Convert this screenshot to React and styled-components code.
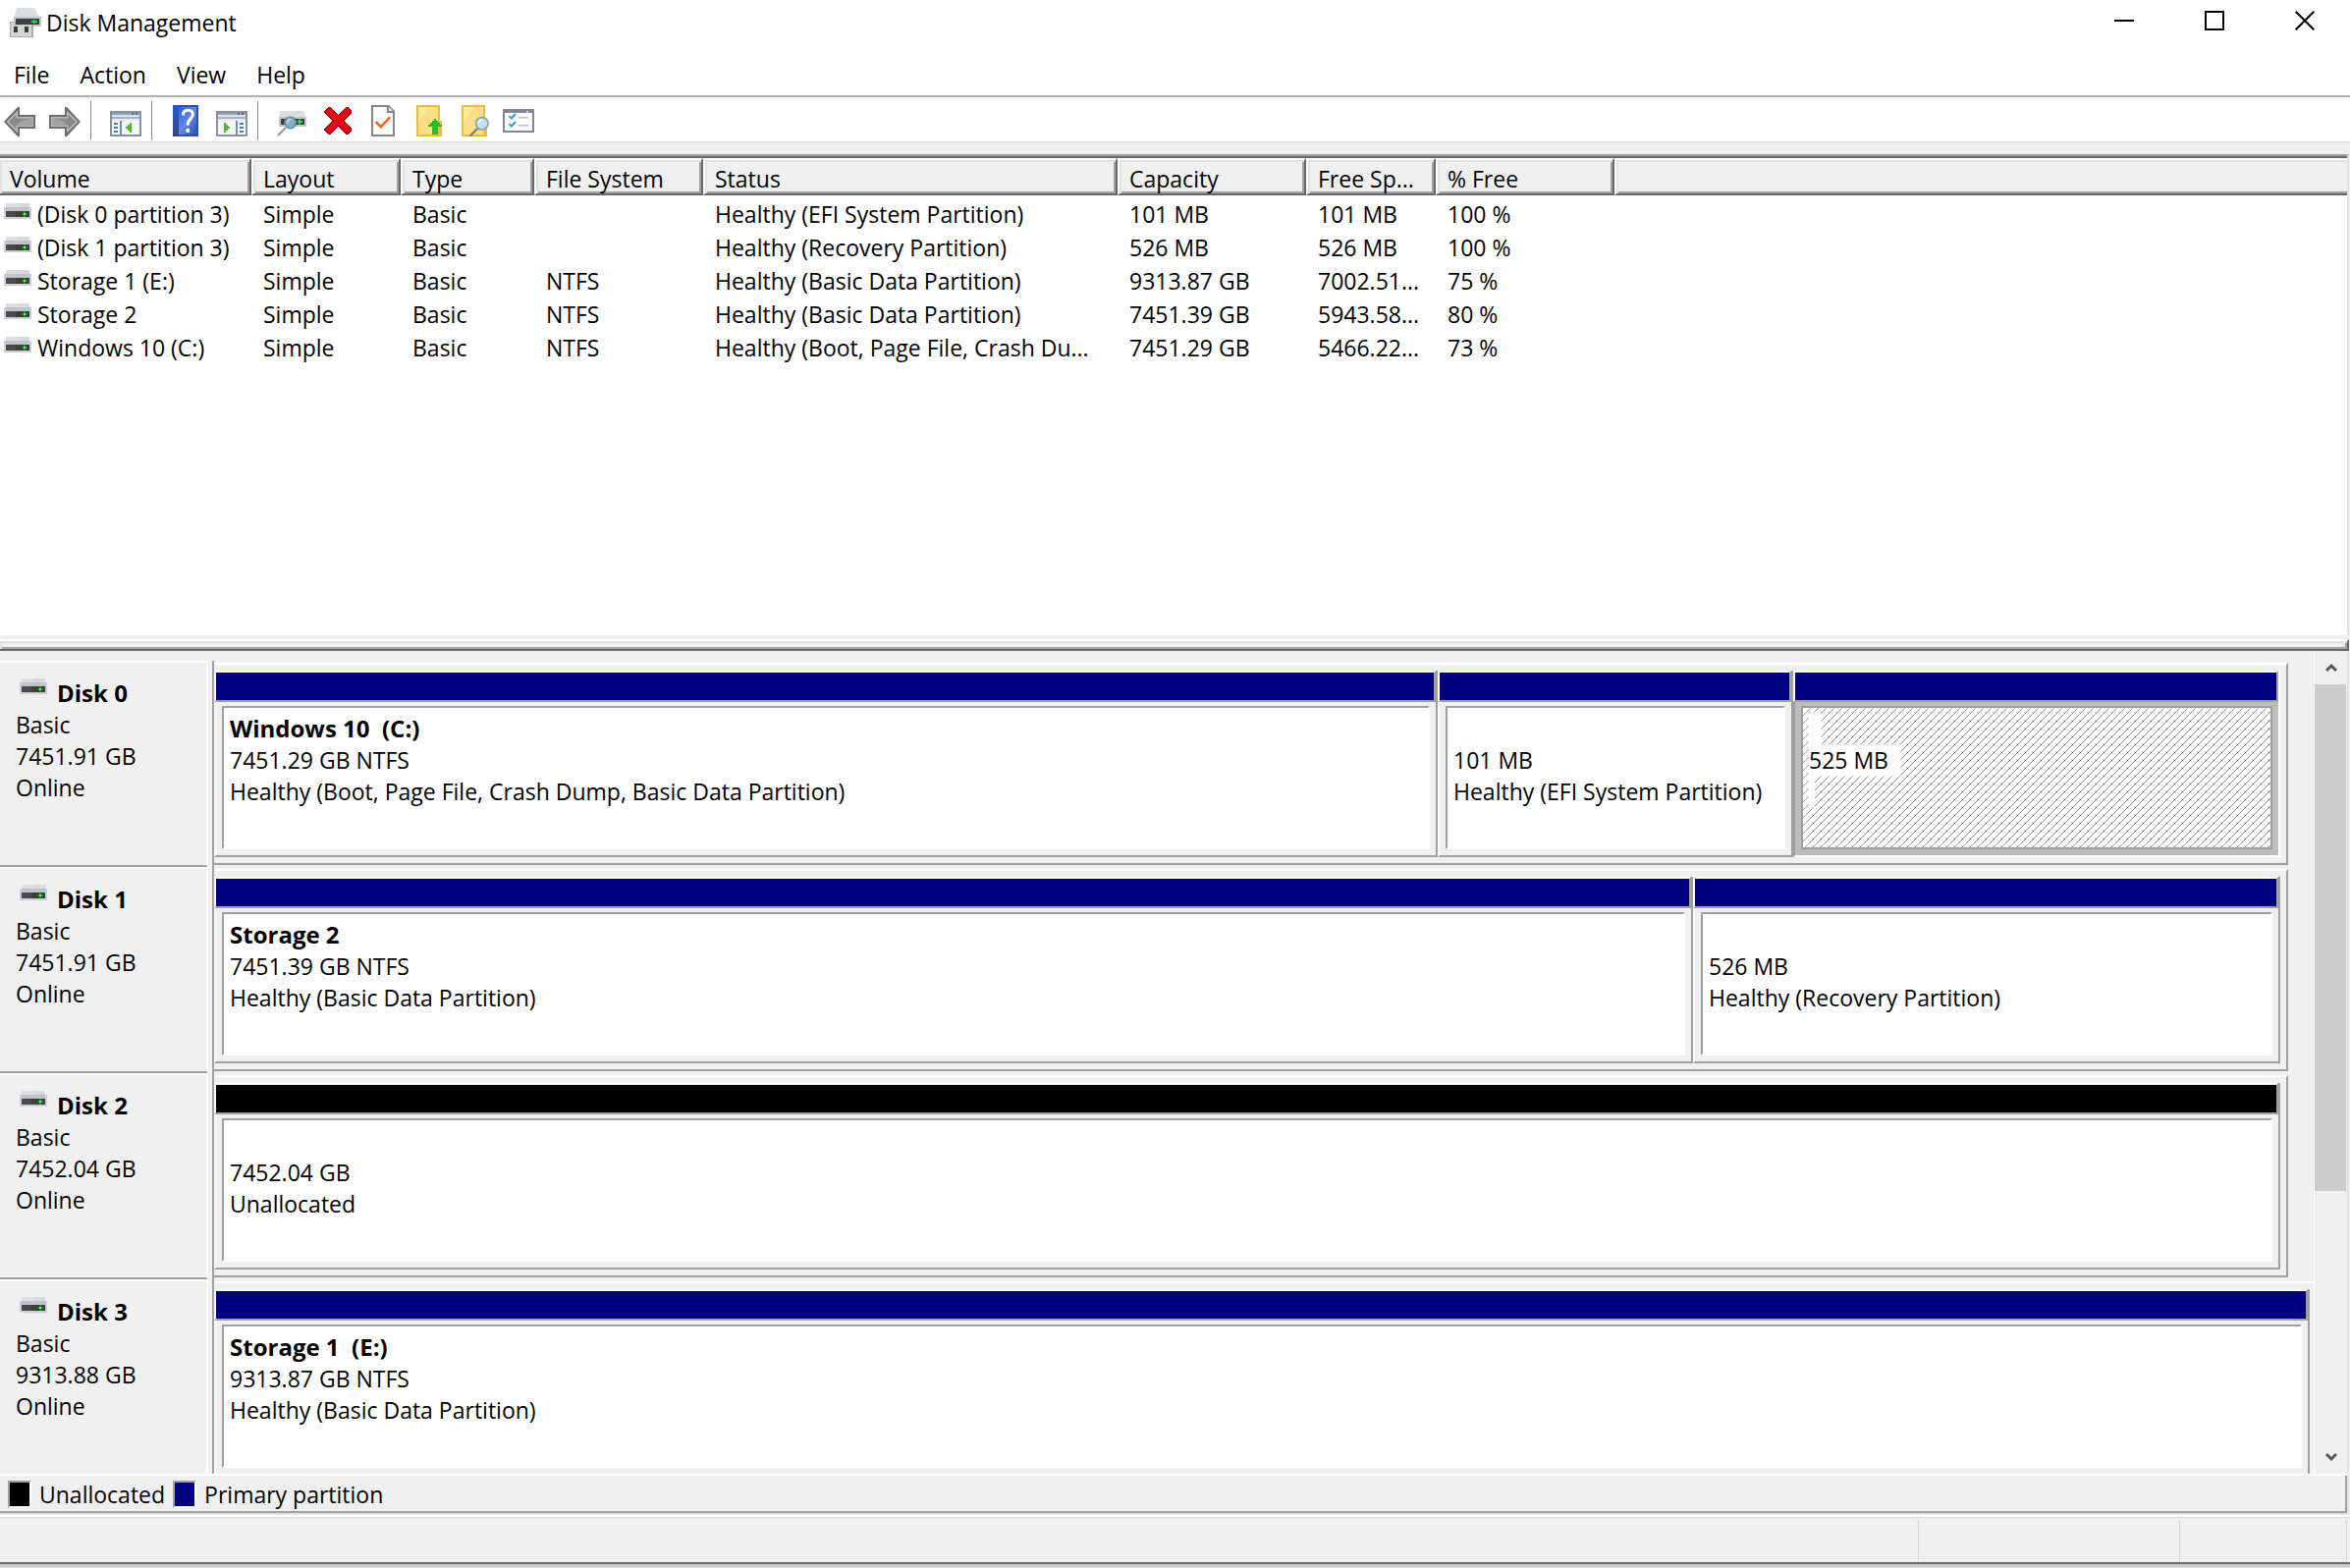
import styled, { createGlobalStyle, css } from 'styled-components';

const GlobalStyle = createGlobalStyle`
  * {
    box-sizing: border-box;
  }

  body {
    margin: 0;
    background: #f0f0f0;
    color: #000;
    font-family: 'Open Sans', 'Noto Sans', sans-serif;
    font-size: 23px;
    line-height: 32px;
  }

  button {
    padding: 0;
    border: 0;
    background: none;
    color: inherit;
    font: inherit;
  }

  svg {
    display: block;
  }
`;

const Window = styled.div`
  display: flex;
  flex-direction: column;
  height: 100vh;
  overflow: hidden;
`;

const TitleBar = styled.header`
  display: flex;
  align-items: flex-start;
  flex: none;
  height: 47px;
  background: #fff;

  h1 {
    flex: 1;
    margin: 0;
    padding: 7px 0 0 5px;
    font-size: 23px;
    font-weight: 400;
    line-height: 32px;
  }
`;

const AppIcon = styled.svg`
  width: 32px;
  height: 32px;
  margin: 7px 0 0 10px;
`;

const WindowButton = styled.button`
  display: flex;
  align-items: center;
  justify-content: center;
  width: 92px;
  height: 42px;

  &:hover {
    background: #e5e5e5;
  }
`;

const MenuBar = styled.nav`
  display: flex;
  gap: 5px;
  flex: none;
  height: 50px;
  padding: 8px 0 0 1px;
  background: #fff;

  button {
    height: 42px;
    padding: 0 13px;
  }

  button:hover {
    background: #e5f3ff;
  }
`;

const ToolBar = styled.div`
  display: flex;
  align-items: center;
  gap: 14px;
  flex: none;
  height: 48px;
  padding: 3px 4px 0;
  border-top: 2px solid #b0b1b5;
  border-bottom: 1px solid #d9d9d9;
  background: #fff;
  box-shadow: inset 0 2px #f3f6fb;
`;

const ToolGroup = styled.div`
  display: flex;
  gap: 14px;
`;

const ToolSeparator = styled.span`
  width: 1px;
  height: 40px;
  margin: 0 5px 0 -4px;
  background: #8e8e8e;
`;

const ToolButton = styled.button`
  width: 32px;
  height: 32px;

  svg {
    width: 32px;
    height: 32px;
  }
`;

const VolumePane = styled.section`
  flex: 486 1 0;
  min-height: 0;
  margin: 12px 1px 0 0;
  overflow: hidden;
  border-top: 2px solid #a0a0a0;
  border-right: 2px solid #e3e3e3;
  background: #fff;
  box-shadow: inset 0 2px #696969;
  padding-top: 2px;
`;

const VolumeTable = styled.table`
  width: 100%;
  table-layout: fixed;
  border-spacing: 0;
  text-align: left;
  white-space: nowrap;

  th {
    padding: 4px 0 0 10px;
    border: 2px solid #fff;
    border-right-color: #696969;
    border-bottom-color: #696969;
    background: #f0f0f0;
    box-shadow: inset 2px 2px #e3e3e3, inset -2px -2px #a0a0a0;
    font-weight: 400;
    line-height: 30px;
  }

  th:first-child {
    border-left: 0;
  }

  th:last-child {
    border-right: 0;
    box-shadow: inset 2px 2px #e3e3e3, inset 0 -2px #a0a0a0;
  }

  td {
    padding: 0 0 0 12px;
    line-height: 34px;
  }

  td:first-child {
    padding-left: 4px;
  }

  tbody::before {
    content: '';
    display: block;
    height: 2px;
  }
`;

const VolumeName = styled.span`
  display: flex;
  gap: 6px;

  svg {
    margin-top: 6px;
  }
`;

const Splitter = styled.div`
  flex: none;
  height: 12px;
  margin: 4px 1px 0 0;
  border: solid;
  border-width: 2px 2px 2px 0;
  border-color: #fff #696969 #696969;
  box-shadow: inset 2px 2px #e3e3e3, inset -2px -2px #a0a0a0;
`;

const DiskPane = styled.section`
  display: flex;
  flex: 838 1 0;
  min-height: 0;
  margin-right: 1px;
  border-right: 2px solid #e3e3e3;
`;

const DiskList = styled.div`
  flex: 1;
  min-width: 0;
  padding-top: 10px;
  overflow: hidden;
`;

const DiskRow = styled.article`
  display: flex;
  gap: 4px;
  height: 210px;
`;

const DiskLabel = styled.div`
  width: 212px;
  padding: 15px 0 0 16px;
  border-top: 2px solid #fff;
  border-right: 2px solid #fff;
  border-bottom: 2px solid #a0a0a0;

  h2 {
    display: flex;
    gap: 10px;
    margin: 0;
    padding-left: 4px;
    font-size: 24px;
    font-weight: 700;
    line-height: 32px;
  }

  p {
    margin: 0;
  }

  svg {
    margin-top: 1px;
  }
`;

const DiskTrack = styled.div`
  flex: 1;
  min-width: 0;
  padding: 2px ${({ $wide }) => ($wide ? 0 : 26)}px 2px 0;
  border-left: 2px solid #a0a0a0;
`;

const DiskFrame = styled.div`
  display: flex;
  height: 206px;
  padding: 6px ${({ $wide }) => ($wide ? 4 : 6)}px 6px 0;
  border-top: 2px solid #fff;
  border-bottom: 2px solid #a0a0a0;
  border-right: ${({ $wide }) => ($wide ? '0' : '2px solid #a0a0a0')};
`;

const PartitionBox = styled.div`
  display: flex;
  flex-direction: column;
  flex: ${({ $share }) => $share} 1 0;
  min-width: 0;
  border-right: 2px solid ${({ $selected }) => ($selected ? '#fff' : '#a0a0a0')};
`;

const PartitionBar = styled.div`
  height: 32px;
  border: 2px solid #fff;
  border-right-color: #a0a0a0;
  border-bottom-color: #a0a0a0;
  background: ${({ $color }) => $color};
`;

const PartitionBody = styled.div`
  display: flex;
  flex: 1;
  padding: 4px 6px 6px;
  border-left: 2px solid #fff;
  border-bottom: 2px solid #a0a0a0;

  ${({ $selected }) =>
    $selected &&
    css`
      background: #bcbcbc;
      border-left-color: #a0a0a0;
      border-bottom-color: #fff;
    `}
`;

const PartitionContent = styled.div`
  display: flex;
  flex: 1;
  flex-direction: column;
  align-items: flex-start;
  min-width: 0;
  padding: 5px 6px;
  border: 2px solid #fff;
  border-top-color: #a0a0a0;
  border-left-color: #a0a0a0;
  background: #fff;
  white-space: pre;

  ${({ $selected }) =>
    $selected &&
    css`
      border-color: #a0a0a0;
      background: linear-gradient(
          135deg,
          transparent 47%,
          #a0a0a0 47%,
          #a0a0a0 53%,
          transparent 53%
        )
        0 0 / 8px 8px #fff;
    `}
`;

const PartitionLine = styled.span`
  height: 32px;
  background: #fff;
  font-size: ${({ $bold }) => ($bold ? 24 : 23)}px;
  font-weight: ${({ $bold }) => ($bold ? 700 : 400)};
`;

const ScrollBar = styled.div`
  display: flex;
  flex-direction: column;
  flex: none;
  width: 34px;
  border-left: 1px solid #fff;
`;

const ScrollButton = styled.button`
  display: flex;
  align-items: center;
  justify-content: center;
  flex: none;
  height: 34px;
`;

const ScrollTrack = styled.div`
  flex: 1;
  padding-right: 1px;
`;

const ScrollThumb = styled.div`
  height: 67%;
  background: #cdcdcd;
`;

const Legend = styled.footer`
  display: flex;
  align-items: center;
  gap: 8px;
  flex: none;
  height: 42px;
  margin-right: 1px;
  padding: 0 8px;
  border-top: 2px solid #fff;
  border-right: 2px solid #e3e3e3;
  border-bottom: 2px solid #e3e3e3;
  box-shadow: inset -2px -2px #a0a0a0;
`;

const LegendItem = styled.span`
  display: flex;
  align-items: center;
  gap: 8px;
`;

const Swatch = styled.span`
  width: 24px;
  height: 28px;
  border: 2px solid #fff;
  border-top-color: #a0a0a0;
  border-left-color: #a0a0a0;
  background: ${({ $color }) => $color};
`;

const StatusBar = styled.div`
  display: flex;
  flex: none;
  height: 48px;
  margin: 2px 0 4px;
  padding: 3px 3px 1px 0;
  border-top: 1px solid #d7d7d7;
  border-bottom: 2px solid #6e6e6e;
  box-shadow: 0 -2px #fff;
`;

const StatusCell = styled.span`
  flex: ${({ $width }) => ($width ? `0 0 ${$width}px` : 1)};
  border-right: 1px solid #d7d7d7;
`;

const WindowShadow = styled.div`
  flex: none;
  height: 4px;
  margin-top: -4px;
  background: linear-gradient(#c4c4c4, #dadada);
`;

const DriveIcon = () => (
  <svg width="28" height="16" viewBox="0 0 14 8" shapeRendering="crispEdges">
    <path d="M1 0h12v2H1z" fill="#d7dadd" />
    <path d="M1 0h6v2H1z" fill="#dcdee1" />
    <path d="M0 2h14v6H0z" fill="#ccd0d6" />
    <path d="M1 2h12v2H1z" fill="#bfc4c9" />
    <path d="M1 4h12v3H1z" fill="#3c3c3c" />
    <path d="M1 4h5v3H1z" fill="#4a4a4a" />
    <path d="M9 5h3v1H9zM10 4h1v3h-1z" fill="#1f8a26" />
    <path d="M10 5h1v1h-1z" fill="#5dff58" />
  </svg>
);

const ArrowIcon = ({ forward }) => (
  <svg viewBox="0 0 16 16">
    <g transform={forward ? 'matrix(-1 0 0 1 16 0)' : undefined}>
      <path d="M0 8.5 7 1H8v4h8v7H8v4H7z" fill="#6d6d6d" />
      <path d="M1.3 8.5 7 2.7V6h8v5H7v3.3z" fill="#bdbdbd" />
      <path d="M2.4 8.5 6.3 4.6V6.7h8v3.6h-8v2.1z" fill="#888" />
      <path d="M8 8.5 13 7h1v3H7z" fill="#a3a3a3" />
    </g>
  </svg>
);

const PaneIcon = ({ right }) => (
  <svg viewBox="0 0 16 16" shapeRendering="crispEdges">
    <path d="M0 3h16v13H0z" fill="#8b9098" />
    <path d="M1 4h14v1H1z" fill="#8fa0bb" />
    <path d="M1 5h14v1H1z" fill="#dfe3ea" />
    <path d="M1 6h14v1H1z" fill="#a9b3c3" />
    <path d="M1 7h14v1H1z" fill="#e6e9ee" />
    <path d="M11 4h1v1h-1zM13 4h1v1h-1z" fill="#4d6385" />
    <path d="M1 8h14v7H1z" fill="#f6f7f8" />
    {right ? (
      <>
        <path d="M10 8h1v7h-1z" fill="#7b8ca8" />
        <path d="M12 9h2v1h-2zM12 11h2v1h-2zM12 13h2v1h-2z" fill="#3f7fc4" />
        <path d="M4 9h1v1h1v1h1v1H6v1H5v1H4z" fill="#4fb82c" />
      </>
    ) : (
      <>
        <path d="M5 8h1v7H5z" fill="#7b8ca8" />
        <path d="M2 9h2v1H2zM2 11h2v1H2zM2 13h2v1H2z" fill="#3f7fc4" />
        <path d="M11 9h-1v1H9v1H8v1h1v1h1v1h1z" fill="#4fb82c" />
      </>
    )}
  </svg>
);

const HelpIcon = () => (
  <svg viewBox="0 0 16 16">
    <defs>
      <linearGradient id="help-face" x1="0" y1="0" x2="1" y2="1">
        <stop offset="0" stopColor="#2f60dc" />
        <stop offset="0.5" stopColor="#6489e6" />
        <stop offset="1" stopColor="#2c4fb6" />
      </linearGradient>
      <linearGradient id="help-spine" x1="0" y1="0" x2="0" y2="1">
        <stop offset="0" stopColor="#2a5bd0" />
        <stop offset="1" stopColor="#33447c" />
      </linearGradient>
    </defs>
    <path d="M1 0h13v16H1z" fill="#2d50b4" />
    <path d="M4 1h9v14H4z" fill="url(#help-face)" />
    <path d="M1 0h3v16H1z" fill="url(#help-spine)" />
    <path
      d="M6.2 5.2C6.2 3.4 7.2 2.6 8.7 2.6s2.5.9 2.5 2.3c0 2-2.6 2.3-2.6 4.6v.9"
      fill="none"
      stroke="#fff"
      strokeWidth="1.5"
    />
    <path d="M7.7 12h1.8v1.9H7.7z" fill="#fff" />
  </svg>
);

const DiskSearchIcon = () => (
  <svg viewBox="0 0 16 16">
    <path d="M1.5 3h12.3l.9 3.5H1z" fill="#dcdee0" />
    <path d="M1 6h14v5H1z" fill="#c4c6c9" />
    <path d="M2 7h12v3H2z" fill="#3d3d3d" />
    <path d="M10.4 8h2.6v1h-2.6zM11 7.2h1v2.6h-1z" fill="#35d43c" />
    <path d="M4.5 11.5.5 15.5" stroke="#8d949b" strokeWidth="1" />
    <circle cx="6.8" cy="9" r="2.9" fill="#87aecb" stroke="#6a8296" strokeWidth="0.7" />
    <path d="M5.2 9a1.8 1.8 0 0 1 2-1.8" fill="none" stroke="#bcd8ea" strokeWidth="0.9" />
  </svg>
);

const DeleteIcon = () => (
  <svg viewBox="0 0 16 16" shapeRendering="crispEdges">
    <path
      d="M3 1h1l4 4 4-4h1l2 2v1l-4 4 4 4v1l-2 2h-1l-4-4-4 4H3l-2-2v-1l4-4-4-4V3z"
      fill="#b4000d"
    />
    <path d="M3 2h1l4 4 4-4h1l1 1v1l-4 4 4 4v1l-1 1h-1l-4-4-4 4H3l-1-1v-1l4-4-4-4V3z" fill="#e30613" />
  </svg>
);

const CheckDocIcon = () => (
  <svg viewBox="0 0 16 16">
    <path d="M2 0h9l3 3v13H2z" fill="#868686" />
    <path d="M3 1h7v3h3v11H3z" fill="#fbfbfc" />
    <path d="M11 1l2 2h-2z" fill="#e4e4e4" />
    <path d="M4.3 8.6l2.6 2.5 4.7-5" fill="none" stroke="#f0601c" strokeWidth="1.2" />
  </svg>
);

const FolderShape = () => (
  <>
    <path d="M2 0h12v8h1v8H2z" fill="#e6bd45" />
    <path d="M3 1h10v14H3z" fill="#fbdf86" />
    <path d="M3 1h5L3 9z" fill="#fde9a4" />
  </>
);

const FolderUpIcon = () => (
  <svg viewBox="0 0 16 16" shapeRendering="crispEdges">
    <FolderShape />
    <path d="M11 7h1v1h1v1h1v1h1v1h-2v4h-3v-4H8v-1h1V9h1V8h1z" fill="#25bd2b" />
  </svg>
);

const FolderSearchIcon = () => (
  <svg viewBox="0 0 16 16">
    <FolderShape />
    <path d="M10.4 11.8 6.2 15.8" stroke="#777f8c" strokeWidth="1.1" />
    <circle cx="12.4" cy="9.4" r="3.1" fill="#bfe2f3" stroke="#8f9ba6" strokeWidth="0.8" />
    <path d="M10.7 9.2a1.9 1.9 0 0 1 2-1.7" fill="none" stroke="#e9f7fd" strokeWidth="0.9" />
  </svg>
);

const OptionsIcon = () => (
  <svg viewBox="0 0 16 16">
    <path d="M0 2h16v12H0z" fill="#83878d" />
    <path d="M12 3h1v1h-1z" fill="#c9ccd0" />
    <path d="M1 4h14v9H1z" fill="#fafafa" />
    <path d="M3.2 5.6l1.3 1.2 1.9-2.3M3.2 9.6l1.3 1.2 1.9-2.3" fill="none" stroke="#3f97e0" strokeWidth="1" />
    <path d="M8 6h5v.7H8zM8 10h5v.7H8z" fill="#bcbcbc" />
  </svg>
);

const toolGroups = [
  [
    { label: 'Back', icon: <ArrowIcon /> },
    { label: 'Forward', icon: <ArrowIcon forward /> },
  ],
  [{ label: 'Show/Hide Console Tree', icon: <PaneIcon /> }],
  [
    { label: 'Help', icon: <HelpIcon /> },
    { label: 'Show/Hide Action Pane', icon: <PaneIcon right /> },
  ],
  [
    { label: 'Rescan Disks', icon: <DiskSearchIcon /> },
    { label: 'Delete', icon: <DeleteIcon /> },
    { label: 'Properties', icon: <CheckDocIcon /> },
    { label: 'Open', icon: <FolderUpIcon /> },
    { label: 'Explore', icon: <FolderSearchIcon /> },
    { label: 'Settings', icon: <OptionsIcon /> },
  ],
];

const columns = [
  { title: 'Volume', width: 256 },
  { title: 'Layout', width: 152 },
  { title: 'Type', width: 136 },
  { title: 'File System', width: 172 },
  { title: 'Status', width: 422 },
  { title: 'Capacity', width: 192 },
  { title: 'Free Sp...', width: 132 },
  { title: '% Free', width: 182 },
  { title: '' },
];

const volumes = [
  ['(Disk 0 partition 3)', 'Simple', 'Basic', '', 'Healthy (EFI System Partition)', '101 MB', '101 MB', '100 %'],
  ['(Disk 1 partition 3)', 'Simple', 'Basic', '', 'Healthy (Recovery Partition)', '526 MB', '526 MB', '100 %'],
  ['Storage 1 (E:)', 'Simple', 'Basic', 'NTFS', 'Healthy (Basic Data Partition)', '9313.87 GB', '7002.51...', '75 %'],
  ['Storage 2', 'Simple', 'Basic', 'NTFS', 'Healthy (Basic Data Partition)', '7451.39 GB', '5943.58...', '80 %'],
  ['Windows 10 (C:)', 'Simple', 'Basic', 'NTFS', 'Healthy (Boot, Page File, Crash Du...', '7451.29 GB', '5466.22...', '73 %'],
];

const PRIMARY = '#000080';
const UNALLOCATED = '#000000';

const disks = [
  {
    name: 'Disk 0',
    size: '7451.91 GB',
    partitions: [
      {
        share: 1244,
        color: PRIMARY,
        lines: ['Windows 10  (C:)', '7451.29 GB NTFS', 'Healthy (Boot, Page File, Crash Dump, Basic Data Partition)'],
      },
      { share: 360, color: PRIMARY, lines: ['', '101 MB', 'Healthy (EFI System Partition)'] },
      { share: 494, color: PRIMARY, selected: true, lines: ['  ', '525 MB  ', ' '] },
    ],
  },
  {
    name: 'Disk 1',
    size: '7451.91 GB',
    partitions: [
      { share: 1504, color: PRIMARY, lines: ['Storage 2', '7451.39 GB NTFS', 'Healthy (Basic Data Partition)'] },
      { share: 596, color: PRIMARY, lines: ['', '526 MB', 'Healthy (Recovery Partition)'] },
    ],
  },
  {
    name: 'Disk 2',
    size: '7452.04 GB',
    partitions: [{ share: 1, color: UNALLOCATED, lines: ['', '7452.04 GB', 'Unallocated'] }],
  },
  {
    name: 'Disk 3',
    size: '9313.88 GB',
    wide: true,
    partitions: [
      { share: 1, color: PRIMARY, lines: ['Storage 1  (E:)', '9313.87 GB NTFS', 'Healthy (Basic Data Partition)'] },
    ],
  },
];

const Partition = ({ share, color, selected, lines }) => (
  <PartitionBox $share={share} $selected={selected}>
    <PartitionBar $color={color} />
    <PartitionBody $selected={selected}>
      <PartitionContent $selected={selected}>
        {lines.map((line, i) => (
          <PartitionLine key={i} $bold={i === 0}>
            {line}
          </PartitionLine>
        ))}
      </PartitionContent>
    </PartitionBody>
  </PartitionBox>
);

const Disk = ({ name, size, wide, partitions }) => (
  <DiskRow>
    <DiskLabel>
      <h2>
        <DriveIcon />
        {name}
      </h2>
      <p>Basic</p>
      <p>{size}</p>
      <p>Online</p>
    </DiskLabel>
    <DiskTrack $wide={wide}>
      <DiskFrame $wide={wide}>
        {partitions.map((partition, i) => (
          <Partition key={i} {...partition} />
        ))}
      </DiskFrame>
    </DiskTrack>
  </DiskRow>
);

const App = () => (
  <Window>
    <GlobalStyle />
    <TitleBar>
      <AppIcon viewBox="0 0 32 32">
        <path d="M7 1h18l6 11H4z" fill="#dddfe1" />
        <path d="M4 10h28v10H4z" fill="#c2c4c6" />
        <path d="M6 12h24v6H6z" fill="#3f4042" />
        <path d="M22 14h6v2h-6zM24 13h2v4h-2z" fill="#30d03a" />
        <path d="M0 15h6v4h16v-1h2v13H0z" fill="#a9abad" />
        <path d="M1 16h4v3h17v11H1z" fill="#d3d5d7" />
        <path d="M4 20h4v6H4zM15 20h4v6h-4z" fill="#3c3c3c" />
      </AppIcon>
      <h1>Disk Management</h1>
      <WindowButton aria-label="Minimize">
        <svg width="20" height="20" viewBox="0 0 20 20">
          <path d="M0 9h20v2H0z" />
        </svg>
      </WindowButton>
      <WindowButton aria-label="Maximize">
        <svg width="20" height="20" viewBox="0 0 20 20" fill="none" stroke="#000" strokeWidth="2">
          <path d="M1 1h18v18H1z" />
        </svg>
      </WindowButton>
      <WindowButton aria-label="Close">
        <svg width="20" height="20" viewBox="0 0 20 20" stroke="#000" strokeWidth="2">
          <path d="M.7.7l18.6 18.6M19.3.7.7 19.3" />
        </svg>
      </WindowButton>
    </TitleBar>

    <MenuBar>
      {['File', 'Action', 'View', 'Help'].map((item) => (
        <button key={item}>{item}</button>
      ))}
    </MenuBar>

    <ToolBar>
      {toolGroups.map((group, i) => [
        i > 0 && <ToolSeparator key={`separator-${i}`} />,
        <ToolGroup key={i}>
          {group.map(({ label, icon }) => (
            <ToolButton key={label} aria-label={label}>
              {icon}
            </ToolButton>
          ))}
        </ToolGroup>,
      ])}
    </ToolBar>

    <VolumePane>
      <VolumeTable>
        <colgroup>
          {columns.map(({ title, width }) => (
            <col key={title} width={width} />
          ))}
        </colgroup>
        <thead>
          <tr>
            {columns.map(({ title }) => (
              <th key={title}>{title}</th>
            ))}
          </tr>
        </thead>
        <tbody>
          {volumes.map(([name, ...cells]) => (
            <tr key={name}>
              <td>
                <VolumeName>
                  <DriveIcon />
                  {name}
                </VolumeName>
              </td>
              {cells.map((cell, i) => (
                <td key={i}>{cell}</td>
              ))}
              <td />
            </tr>
          ))}
        </tbody>
      </VolumeTable>
    </VolumePane>

    <Splitter />

    <DiskPane>
      <DiskList>
        {disks.map((disk) => (
          <Disk key={disk.name} {...disk} />
        ))}
      </DiskList>
      <ScrollBar>
        <ScrollButton aria-label="Scroll up">
          <svg width="12" height="10" viewBox="0 0 12 10" fill="none" stroke="#555" strokeWidth="3">
            <path d="M1 8l5-5 5 5" />
          </svg>
        </ScrollButton>
        <ScrollTrack>
          <ScrollThumb />
        </ScrollTrack>
        <ScrollButton aria-label="Scroll down">
          <svg width="12" height="10" viewBox="0 0 12 10" fill="none" stroke="#555" strokeWidth="3">
            <path d="M1 2l5 5 5-5" />
          </svg>
        </ScrollButton>
      </ScrollBar>
    </DiskPane>

    <Legend>
      <LegendItem>
        <Swatch $color={UNALLOCATED} />
        Unallocated
      </LegendItem>
      <LegendItem>
        <Swatch $color={PRIMARY} />
        Primary partition
      </LegendItem>
    </Legend>

    <StatusBar>
      <StatusCell />
      <StatusCell $width={266} />
      <StatusCell $width={170} />
    </StatusBar>
    <WindowShadow />
  </Window>
);

export default App;
